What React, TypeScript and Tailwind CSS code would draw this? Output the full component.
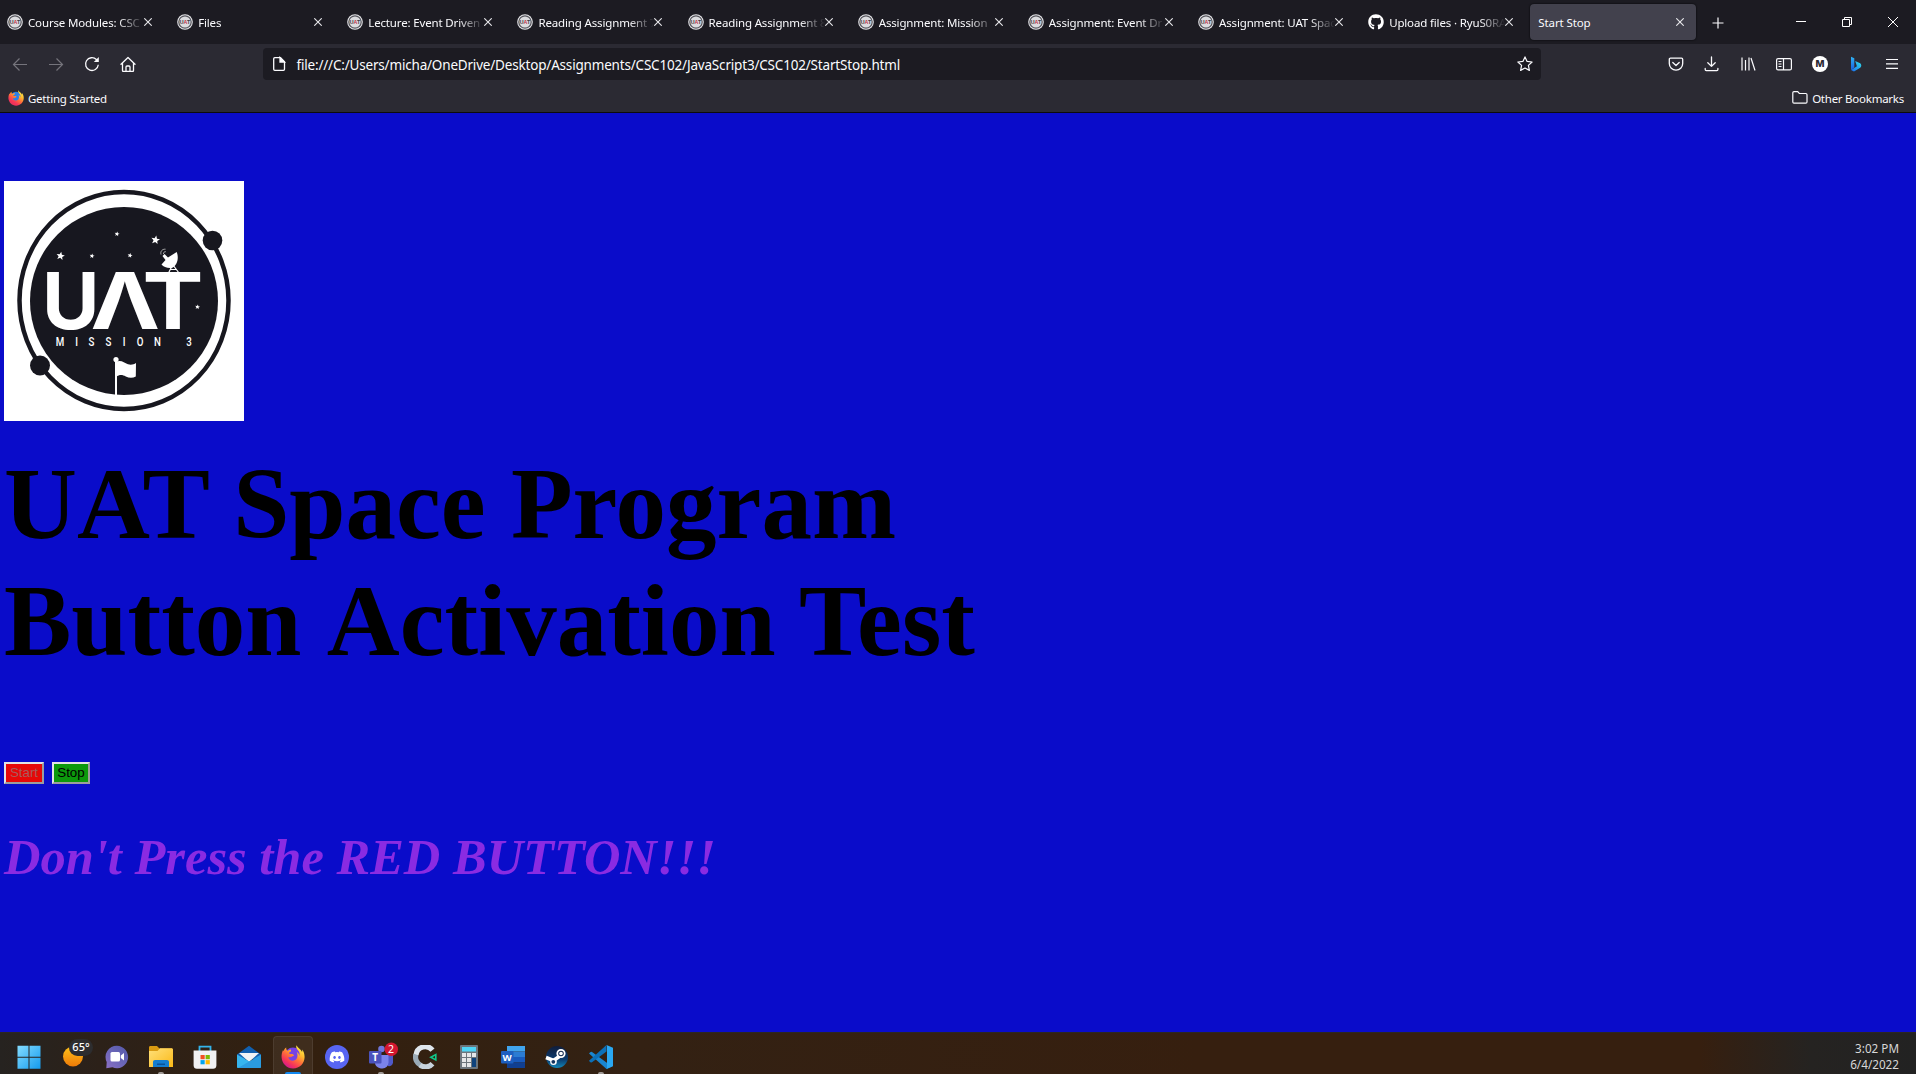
import React from "react";
import { FaGithub, FaDiscord } from "react-icons/fa";

const UI = "font-['Noto_Sans','Open_Sans',sans-serif]";

function UatFavicon() {
  return (
    <svg width="16" height="16" viewBox="0 0 16 16" className="shrink-0">
      <circle cx="8" cy="8" r="7.8" fill="#e9e9ec" />
      <circle cx="8" cy="8" r="6.2" fill="#dcdcdf" stroke="#55555c" strokeWidth="1.2" />
      <text x="8" y="10.2" fontSize="6" fontWeight="700" fontFamily="Liberation Sans, sans-serif" textAnchor="middle" textLength="10.5" lengthAdjust="spacingAndGlyphs" fill="#3b3b44">
        U<tspan fill="#c2324a">A</tspan>T
      </text>
    </svg>
  );
}

function CloseX() {
  return (
    <svg width="8" height="8" viewBox="0 0 8 8" className="shrink-0">
      <path d="M.3.3l7.4 7.4M7.7.3L.3 7.7" stroke="#e8e8ec" strokeWidth="1.1" fill="none" />
    </svg>
  );
}

const tabs = [
  { title: "Course Modules: CSC", icon: "uat" },
  { title: "Files", icon: "uat" },
  { title: "Lecture: Event Driven", icon: "uat" },
  { title: "Reading Assignment 7", icon: "uat" },
  { title: "Reading Assignment 8", icon: "uat" },
  { title: "Assignment: Mission", icon: "uat" },
  { title: "Assignment: Event Dr", icon: "uat" },
  { title: "Assignment: UAT Spac", icon: "uat" },
  { title: "Upload files · RyuS0RA", icon: "github" },
];

function TabBar() {
  return (
    <div className="flex h-11 items-start bg-[#1c1b22]">
      {tabs.map((t, i) => (
        <div key={i} className="flex h-11 w-[170.15px] shrink-0 items-center pl-[7px]">
          {t.icon === "uat" ? <UatFavicon /> : <FaGithub size={16} color="#fff" className="shrink-0" />}
          <div className="mt-px ml-[5px] w-[116px] shrink-0 overflow-hidden text-[11.5px] leading-5 tracking-[-0.15px] whitespace-nowrap text-[#fbfbfe] [mask-image:linear-gradient(to_right,#000_78%,transparent)]">
            {t.title}
          </div>
          <CloseX />
        </div>
      ))}
      <div className="mt-1 -ml-px flex h-9 w-[166px] shrink-0 items-center justify-between rounded bg-[#42414d] pr-3 pl-2 shadow-[0_0_2px_#000]">
        <span className="mt-px text-[11.5px] tracking-[-0.1px] text-[#fbfbfe]">Start Stop</span>
        <CloseX />
      </div>
      <svg width="12" height="12" viewBox="0 0 12 12" className="mt-[17px] ml-[15.500px]">
        <path d="M6 .5v11M.5 6h11" stroke="#fbfbfe" strokeWidth="1.2" />
      </svg>
      <div className="ml-auto flex h-11 items-center gap-[36px] pr-[18px]">
        <svg width="10" height="10" viewBox="0 0 10 10"><path d="M0 4.5h10" stroke="#fff" /></svg>
        <svg width="10" height="10" viewBox="0 0 10 10" fill="none" stroke="#fff"><path d="M.5 2.5h7v7h-7zM2.5 2.5v-2h7v7h-2" /></svg>
        <svg width="10" height="10" viewBox="0 0 10 10"><path d="M0 0l10 10M10 0L0 10" stroke="#fff" /></svg>
      </div>
    </div>
  );
}

function BingIcon() {
  return (
    <svg width="16" height="16" viewBox="0 0 16 16">
      <defs>
        <linearGradient id="bing1" x1="0" y1="0" x2="0" y2="1"><stop offset="0" stopColor="#2fb4f5" /><stop offset="1" stopColor="#1a5fe0" /></linearGradient>
        <linearGradient id="bing2" x1="0" y1="1" x2="1" y2="0"><stop offset="0" stopColor="#1a6af0" /><stop offset="1" stopColor="#2fe0e8" /></linearGradient>
      </defs>
      <path d="M3 .8l3.3 1.5v9.3L3 14z" fill="url(#bing1)" />
      <path d="M7.2 5l5 2.3c1.4.8 1.5 3.400 0 4.500L6 15.500 3 14l5.900-3.700z" fill="url(#bing2)" />
    </svg>
  );
}

function NavBar() {
  return (
    <div className="flex h-10 items-center bg-[#2b2a33]">
      <div className="flex w-[263px] items-center pl-3">
        <svg width="16" height="16" viewBox="0 0 16 16" fill="none" stroke="#75747c" strokeWidth="1.2"><path d="M15 8.500H1.500M7.500 2.500l-6 6 6 6" /></svg>
        <svg width="16" height="16" viewBox="0 0 16 16" fill="none" stroke="#75747c" strokeWidth="1.2" className="ml-5"><path d="M1 8.500h13.500M8.500 2.500l6 6-6 6" /></svg>
        <svg width="16" height="16" viewBox="0 0 16 16" fill="none" stroke="#fbfbfe" strokeWidth="1.3" className="ml-5"><path d="M14.300 8.800a6.400 6.400 0 1 1-1.900-5.300l1.300 1.300" /><path d="M14.800 1v5h-5z" fill="#fbfbfe" stroke="none" /></svg>
        <svg width="16" height="16" viewBox="0 0 16 16" fill="none" stroke="#fbfbfe" strokeWidth="1.300" className="ml-[19.500px]" strokeLinejoin="round" strokeLinecap="round"><path d="M1 8.300L8 1.500l7 6.800M2.500 7.200v7.200c0 .8.300 1.100 1.100 1.100h8.800c.8 0 1.100-.3 1.100-1.100V7.200M6 15.300v-4.300c0-.7.300-1 1-1h2c.7 0 1 .3 1 1v4.300" /></svg>
      </div>
      <div className="flex h-8 w-[1278px] items-center rounded bg-[#1c1b22] pr-2 pl-2">
        <svg width="16" height="16" viewBox="0 0 16 16" fill="none" stroke="#fbfbfe" strokeWidth="1.300"><path d="M3.800 1.700h5.700l4 4v7.500c0 .8-.4 1.100-1.100 1.100H3.800c-.7 0-1.100-.4-1.100-1.100V2.800c0-.7.400-1.100 1.100-1.100z" /><path d="M9 1.500V6h4.500z" fill="#fbfbfe" /></svg>
        <span className="mt-[2px] ml-[9.500px] text-[13.500px] tracking-[-0.185px] text-[#fbfbfe]">file:///C:/Users/micha/OneDrive/Desktop/Assignments/CSC102/JavaScript3/CSC102/StartStop.html</span>
        <svg width="16" height="16" viewBox="0 0 16 16" fill="none" stroke="#fbfbfe" strokeWidth="1.200" strokeLinejoin="round" className="ml-auto"><path d="M8 .9l2.100 4.500 5 .6-3.700 3.400 1 5L8 12l-4.400 2.400 1-5L.9 6l5-.6z" /></svg>
      </div>
      <div className="ml-auto flex items-center gap-5 pr-4">
        <svg width="16" height="16" viewBox="0 0 16 16" fill="none" stroke="#fbfbfe" strokeWidth="1.300" strokeLinecap="round" strokeLinejoin="round"><path d="M2.500 2.200h11c.8 0 1.200.4 1.200 1.200V7.500a6.700 6.700 0 0 1-13.400 0V3.400c0-.8.400-1.200 1.200-1.200zM4.800 6.500L8 9.500l3.200-3" /></svg>
        <svg width="16" height="16" viewBox="0 0 16 16" fill="none" stroke="#fbfbfe" strokeWidth="1.300" strokeLinecap="round" strokeLinejoin="round"><path d="M7.500 1v9.300M3.800 6.800l3.700 3.600 3.700-3.600M1.200 12.500v1c0 .8.300 1.100 1.100 1.100h10.500c.8 0 1.100-.3 1.100-1.100v-1" /></svg>
        <svg width="16" height="16" viewBox="0 0 16 16" fill="none" stroke="#fbfbfe" strokeWidth="1.200"><path d="M2 1.500v13M5.500 4v10.500M9 1.500v13M11 2l4 12.500" /></svg>
        <svg width="16" height="16" viewBox="0 0 16 16" fill="none" stroke="#fbfbfe" strokeWidth="1.200"><rect x=".6" y="2.600" width="14.800" height="11.300" rx="1.500" /><path d="M7.500 2.600v11.300M2.500 5.500h3M2.500 8h3M2.500 10.500h3" /></svg>
        <svg width="16" height="16" viewBox="0 0 16 16"><circle cx="8" cy="8" r="8" fill="#fff" /><text x="8" y="11.400" fontSize="9.500" fontWeight="800" fontFamily="Inter, sans-serif" textAnchor="middle" fill="#2b2a33">M</text></svg>
        <BingIcon />
        <svg width="16" height="16" viewBox="0 0 16 16" stroke="#fbfbfe" strokeWidth="1.200"><path d="M2 3.500h12M2 7.900h12M2 12.300h12" /></svg>
      </div>
    </div>
  );
}

function FirefoxIcon({ size, id }: { size: number; id: string }) {
  return (
    <svg width={size} height={size} viewBox="0 0 24 24">
      <defs>
        <linearGradient id={id} x1=".85" y1=".05" x2=".25" y2=".95">
          <stop offset="0" stopColor="#fff44f" /><stop offset=".3" stopColor="#ffbd2f" /><stop offset=".55" stopColor="#ff7139" /><stop offset=".8" stopColor="#f5345a" /><stop offset="1" stopColor={id === "ffSmall" ? "#e8305a" : "#d21a8e"} />
        </linearGradient>
      </defs>
      <circle cx="12" cy="11" r="8.500" fill={id === "ffSmall" ? "#2a7fe8" : "#7542e5"} />
      <path d="M15.500.3c-.8 2 .1 3.500 1.700 5.200 1.800 2 1.600 4.300.9 5.500.1-1.700-1-3.200-2.300-3.900 1.500 3.300.8 8.600-3.800 8.600-3 0-4.600-2.100-4.700-3.800 1.300.8 2.900.4 3.900-.4.900-.7 1.900-.4 1.700-1.200-.3-.9-1.500-1.600-3-1.300-1.200.2-2-.4-2-.9.200-.7 1.600-1 2-1.500.2-.8.300-1.700-.1-2-1.300.2-2.400.6-3.200 1.400C5.700 5.300 5 4.200 5.200 2.600 3.600 3.700 3 5 2.600 6.100l-.7-.9C.9 7.500.4 10 .6 12.400 1 18.500 6 23.500 12.100 23.500c6.400 0 11.500-5.100 11.500-11.500 0-2.800-1-5.500-2.400-7.400.1.700.1 1.700-.1 2.400-1.400-3.200-4.500-4-5.600-6.700z" fill={`url(#${id})`} />
    </svg>
  );
}

function BookmarksBar() {
  return (
    <div className="flex h-[29px] items-center border-b border-[#0c0c0d] bg-[#2b2a33] text-[11.500px] tracking-[-0.25px] text-[#fbfbfe]">
      <div className="flex items-center pl-[8px]">
        <FirefoxIcon size={16} id="ffSmall" />
        <span className="mt-px ml-1">Getting Started</span>
      </div>
      <div className="ml-auto flex items-center gap-1 pr-3">
        <svg width="16" height="16" viewBox="0 0 16 16" fill="none" stroke="#fbfbfe" strokeWidth="1.200"><path d="M2 1.600h3.700L7.300 3.500h6.500c.8 0 1.200.4 1.200 1.200v7.200c0 .8-.4 1.200-1.200 1.200H2c-.8 0-1.200-.4-1.200-1.200V2.800c0-.8.400-1.200 1.200-1.200z" /></svg>
        <span className="mt-px">Other Bookmarks</span>
      </div>
    </div>
  );
}

const star = "M0-1L.26-.33.95-.31.41.13.6.8 0 .42-.6.8-.41.13-.95-.31-.26-.33z";

function MissionLogo() {
  const stars: [number, number, number][] = [[56.500, 75, 4.400], [88, 75, 2.600], [126, 74.500, 2.600], [113, 53, 2.600], [151.500, 59, 4.600], [193.500, 126, 2.600]];
  const letters: [string, number][] = [["M", 56], ["I", 72.500], ["S", 87.500], ["S", 104.500], ["I", 120], ["O", 136], ["N", 153.500], ["3", 185]];
  return (
    <svg width="240" height="240" viewBox="0 0 240 240">
      <rect width="240" height="240" fill="#fff" />
      <ellipse cx="120" cy="119.500" rx="104.500" ry="108.500" fill="none" stroke="#17171f" strokeWidth="4.500" />
      <circle cx="120" cy="120" r="94" fill="#17171f" />
      <circle cx="208.500" cy="59.500" r="9.800" fill="#17171f" />
      <circle cx="36" cy="184.500" r="10" fill="#17171f" />
      {stars.map(([x, y, r], i) => (
        <path key={i} d={star} transform={`translate(${x} ${y}) scale(${r}) rotate(10)`} fill="#fff" />
      ))}
      <g fill="#fff" fontFamily="Inter, Liberation Sans, sans-serif" fontWeight="700" fontSize="78">
        <text x="38" y="148" textLength="57.500" lengthAdjust="spacingAndGlyphs">U</text>
        <text x="86.500" y="148" textLength="69.500" lengthAdjust="spacingAndGlyphs">Λ</text>
        <text x="138.500" y="148" textLength="61" lengthAdjust="spacingAndGlyphs">T</text>
      </g>
      <g fill="#fff" fontFamily="Roboto, sans-serif" fontSize="13.500" fontWeight="500">
        {letters.map(([c, x], i) => (
          <text key={i} textAnchor="middle" transform={`translate(${x} 164.500) scale(.72 1)`}>{c}</text>
        ))}
      </g>
      <path d="M157.500 83.500l4-4.500-3-4 2-2 3.500 3.500 8.700-5.500c2.500 6 .5 14-5.200 16-4 .5-8-1-10-3.500z" fill="#fff" />
      <path d="M168 85l-3.500 7M169 84l6 8M166 88.500h6" stroke="#fff" strokeWidth="1.200" fill="none" />
      <path d="M157 73.500c-.8-3 1-5.500 4.500-5.300M159.500 73c-.3-1.500.8-2.400 2.300-2.300" stroke="#bbb" strokeWidth=".9" fill="none" />
      <circle cx="112" cy="178.500" r="2.600" fill="#fff" />
      <path d="M111 180h2v34h-2z" fill="#fff" />
      <path d="M112 181c5-2.500 8 1 12 2.300 3 .8 6 .2 8-1.300l-.2 13.500c-3 1.700-7 1.500-10 0-3.500-1.800-6-2.300-9.800.5z" fill="#fff" />
    </svg>
  );
}

function Page() {
  return (
    <main className="h-[919px] overflow-hidden bg-[#0a0cca] pt-[68px] pl-1">
      <MissionLogo />
      <h1 className="mt-[25px] font-['Liberation_Serif',serif] text-[101px] leading-[117px] font-bold whitespace-nowrap text-black">
        UAT Space Program
        <br />
        Button <span className="inline-block">Activation Test</span>
      </h1>
      <div className="mt-[82px] flex gap-2 font-['Liberation_Sans',sans-serif] text-[13.333px] leading-[18px]">
        <button className="h-[22px] w-10 border-2 border-t-[#e3e3e3] border-r-[#9d9d9d] border-b-[#9d9d9d] border-l-[#e3e3e3] bg-[#e60808] text-[#a85c5c]">Start</button>
        <button className="h-[22px] w-[38px] border-2 border-t-[#e3e3e3] border-r-[#9d9d9d] border-b-[#9d9d9d] border-l-[#e3e3e3] bg-[#0c990c] text-black">Stop</button>
      </div>
      <h2 className="mt-[44px] font-['Liberation_Serif',serif] text-[50.500px] leading-[58px] font-bold whitespace-nowrap text-[#8a2be2] italic">
        Don't Press the RED BUTTON!!!
      </h2>
    </main>
  );
}

function Slot({ children, dot, active }: { children: React.ReactNode; dot?: boolean; active?: boolean }) {
  return (
    <div className="relative flex h-[41px] w-11 shrink-0 justify-center pt-3">
      {active && <div className="absolute inset-x-[2px] top-[3px] bottom-0 rounded-t border border-b-0 border-white/8 bg-white/6" />}
      <div className="relative h-6 w-6">{children}</div>
      {dot && <div className="absolute bottom-0 h-[2px] w-[6px] rounded-t bg-[#a09a96]" />}
      {active && <div className="absolute bottom-0 h-[2px] w-4 rounded-t bg-[#1088f0]" />}
    </div>
  );
}

function Taskbar() {
  return (
    <footer className="flex h-[42px] items-start border-t border-[#2c2622] bg-[linear-gradient(90deg,#262320_0,#2c2119_100px,#33200f_300px,#332113_640px,#361f0f_1200px,#361f0f_1700px,#252321_1810px,#222222_1916px)] pl-[6.500px]">
      <Slot>
        <svg width="24" height="24" viewBox="0 0 24 24">
          <defs><linearGradient id="win" x1="0" y1="0" x2="1" y2="1"><stop offset="0" stopColor="#84dcff" /><stop offset="1" stopColor="#149bee" /></linearGradient></defs>
          <path d="M.5.700h11v11h-11zM12.500.700h11v11h-11zM.5 12.700h11v11h-11zM12.500 12.700h11v11h-11z" fill="url(#win)" />
        </svg>
      </Slot>
      <Slot>
        <svg width="24" height="24" viewBox="0 0 24 24">
          <defs><linearGradient id="sun" x1="0" y1="0" x2="0" y2="1"><stop offset="0" stopColor="#ffc21a" /><stop offset="1" stopColor="#ee7a08" /></linearGradient></defs>
          <circle cx="12" cy="11.500" r="10" fill="url(#sun)" />
        </svg>
        <div className="absolute -top-[6px] left-2 flex h-[17px] w-[24px] items-center justify-center rounded-full bg-[#2d2d2f] pl-[1px] text-[11px] font-medium text-white">65°</div>
      </Slot>
      <Slot>
        <svg width="24" height="24" viewBox="0 0 24 24">
          <defs><linearGradient id="chat" x1="0" y1="1" x2="1" y2="0"><stop offset="0" stopColor="#8b6fc4" /><stop offset=".5" stopColor="#6a66b8" /><stop offset="1" stopColor="#5558a8" /></linearGradient></defs>
          <path d="M12 .8a11.200 11.200 0 1 1-4.500 21.500L1.300 23.200 1.700 17A11.200 11.200 0 0 1 12 .8z" fill="url(#chat)" />
          <rect x="5.500" y="7" width="9.500" height="9.500" rx="1.500" fill="#fff" /><path d="M15.800 10.500l3.200-2.500v7.500l-3.200-2.500z" fill="#fff" />
        </svg>
      </Slot>
      <Slot dot>
        <svg width="24" height="24" viewBox="0 0 24 24">
          <defs><linearGradient id="fold" x1="0" y1="0" x2="1" y2="1"><stop offset="0" stopColor="#ffe07a" /><stop offset="1" stopColor="#fbb917" /></linearGradient></defs>
          <path d="M0 2.500C0 1.500.5 1 1.500 1H8l2.500 2.500H23V8H0z" fill="#d99a12" />
          <path d="M0 6h8.500l2.500-2.800h11.500c1 0 1.500.5 1.500 1.500V22H0z" fill="url(#fold)" />
          <path d="M4 22v-5c0-1.200.8-2 2-2h12c1.200 0 2 .8 2 2v5z" fill="#147dd0" /><path d="M8 18.500h8v1.500H8z" fill="#0a5299" />
        </svg>
      </Slot>
      <Slot>
        <svg width="24" height="24" viewBox="0 0 24 24">
          <path d="M6.500 6V1.700h11V6" fill="none" stroke="#34b4ea" strokeWidth="1.800" />
          <path d="M.6 5.500h22.800v15c0 2-1.300 3.300-3.300 3.300H3.900c-2 0-3.300-1.300-3.300-3.300z" fill="#f1f1f2" />
          <path d="M7.500 10h4.200v4.200H7.500z" fill="#f25022" /><path d="M12.600 10h4.200v4.200h-4.200z" fill="#7fba00" /><path d="M7.500 15.100h4.200v4.200H7.500z" fill="#00a4ef" /><path d="M12.600 15.100h4.200v4.200h-4.200z" fill="#ffb900" />
        </svg>
      </Slot>
      <Slot>
        <svg width="24" height="24" viewBox="0 0 24 24">
          <path d="M0 9.500L12 .8l12 8.700V14H0z" fill="#1160b0" /><path d="M2 8h20l-10 9z" fill="#f0f3f6" />
          <path d="M0 9.500L24 23H1c-.7 0-1-.5-1-1z" fill="#36b5ee" /><path d="M24 9.500L1 23h22c.7 0 1-.5 1-1z" fill="#2a9ce0" />
        </svg>
      </Slot>
      <Slot active><FirefoxIcon size={24} id="ffLarge" /></Slot>
      <Slot>
        <div className="flex h-6 w-6 items-center justify-center rounded-full bg-[#5865f2]"><FaDiscord size={16} color="#fff" /></div>
      </Slot>
      <Slot dot>
        <svg width="24" height="24" viewBox="0 0 24 24" className="overflow-visible">
          <circle cx="12.500" cy="4" r="3.300" fill="#6f76d9" /><path d="M16 10h8v7.500a4 4 0 0 1-5 3.500z" fill="#5059c9" />
          <path d="M6 10h13.500v7.500a6 6 0 0 1-6 6c-4.500 0-7.500-2.500-7.500-6z" fill="#7b83eb" />
          <rect x="0" y="6" width="12.500" height="12.500" rx="1" fill="#4b53bc" />
          <text x="6.200" y="16" fontSize="10" fontWeight="700" fontFamily="Noto Sans, sans-serif" textAnchor="middle" fill="#fff">T</text>
          <circle cx="22.300" cy="4.200" r="6.700" fill="#d3162f" />
          <text x="22.100" y="8.100" fontSize="10.500" fontFamily="Noto Sans, sans-serif" textAnchor="middle" fill="#fff">2</text>
        </svg>
      </Slot>
      <Slot>
        <svg width="24" height="24" viewBox="0 0 24 24" fill="none">
          <path d="M19.500 5.200A9.300 9.300 0 0 0 3 10" stroke="#dfe6ec" strokeWidth="5.200" /><path d="M2.900 9.500A9.300 9.300 0 0 0 8 20.500" stroke="#9aaab6" strokeWidth="5.200" /><path d="M7 20A9.300 9.300 0 0 0 19.500 18.800" stroke="#c8d3dc" strokeWidth="5.200" />
          <path d="M22.800 9.500v5.500l-5-2.800z" stroke="#10c88a" strokeWidth="1.600" />
        </svg>
      </Slot>
      <Slot>
        <svg width="24" height="24" viewBox="0 0 24 24">
          <rect x="3" y="0" width="18" height="24" rx="1" fill="#6c757c" /><rect x="5" y="2" width="14" height="4.500" fill="#4fd5f5" />
          {[8, 13, 18].map((y) => [5, 10, 15].map((x) => <rect key={`${x}-${y}`} x={x} y={y} width="4" height="4" fill="#e4e6e8" />))}
          <rect x="15" y="13" width="4" height="9" fill="#0f437c" />
        </svg>
      </Slot>
      <Slot>
        <svg width="24" height="24" viewBox="0 0 24 24">
          <path d="M6 1h18v5.500H6z" fill="#41a5ee" /><path d="M6 6.500h18V12H6z" fill="#2b7cd3" /><path d="M6 12h18v5.500H6z" fill="#185abd" /><path d="M6 17.500h18V23H6z" fill="#103f91" />
          <rect x="0" y="6" width="12.500" height="12.500" rx="1" fill="#1d5fbf" />
          <text x="6.200" y="15.800" fontSize="9.500" fontWeight="700" fontFamily="Noto Sans, sans-serif" textAnchor="middle" fill="#fff">W</text>
        </svg>
      </Slot>
      <Slot>
        <svg width="24" height="24" viewBox="0 0 24 24">
          <defs><linearGradient id="steam" x1="0" y1="0" x2="0" y2="1"><stop offset="0" stopColor="#111d3a" /><stop offset=".6" stopColor="#0b3b6e" /><stop offset="1" stopColor="#1387b8" /></linearGradient></defs>
          <circle cx="12" cy="12" r="11" fill="url(#steam)" />
          <path d="M1 12.500l7.500 3 5-3.500 3-3" stroke="#fff" strokeWidth="3.600" fill="none" /><circle cx="8.500" cy="16.800" r="3.300" fill="#fff" /><circle cx="8.300" cy="16.800" r="1.900" fill="#12335e" />
          <circle cx="16" cy="8.500" r="3.700" fill="#12284e" stroke="#fff" strokeWidth="1.800" /><circle cx="16" cy="8.500" r="1.800" fill="#fff" />
        </svg>
      </Slot>
      <Slot dot>
        <svg width="24" height="24" viewBox="0 0 24 24">
          <path d="M1.200 7.200L0 8.500 17.500 24l5.500-2.500-5.500-4L2.700 6.700z" fill="#1a86d0" />
          <path d="M0 15.800l1.200 1.400 1.500.2L17.500 6.500V0z" fill="#0c70b8" />
          <path d="M17.500 0L24 2.700v18.600L17.500 24c.5-.5.500-1 .5-2V2c0-1-.1-1.500-.5-2z" fill="#2aa8f2" />
        </svg>
      </Slot>
      <div className="mt-[7px] mr-[17px] ml-auto text-right text-[11.700px] leading-4 text-[#d8d8d8]">
        <div>3:02 PM</div>
        <div>6/4/2022</div>
      </div>
    </footer>
  );
}

export default function App() {
  return (
    <div className={`h-[1074px] w-[1916px] overflow-hidden ${UI}`}>
      <TabBar />
      <NavBar />
      <BookmarksBar />
      <Page />
      <Taskbar />
    </div>
  );
}
